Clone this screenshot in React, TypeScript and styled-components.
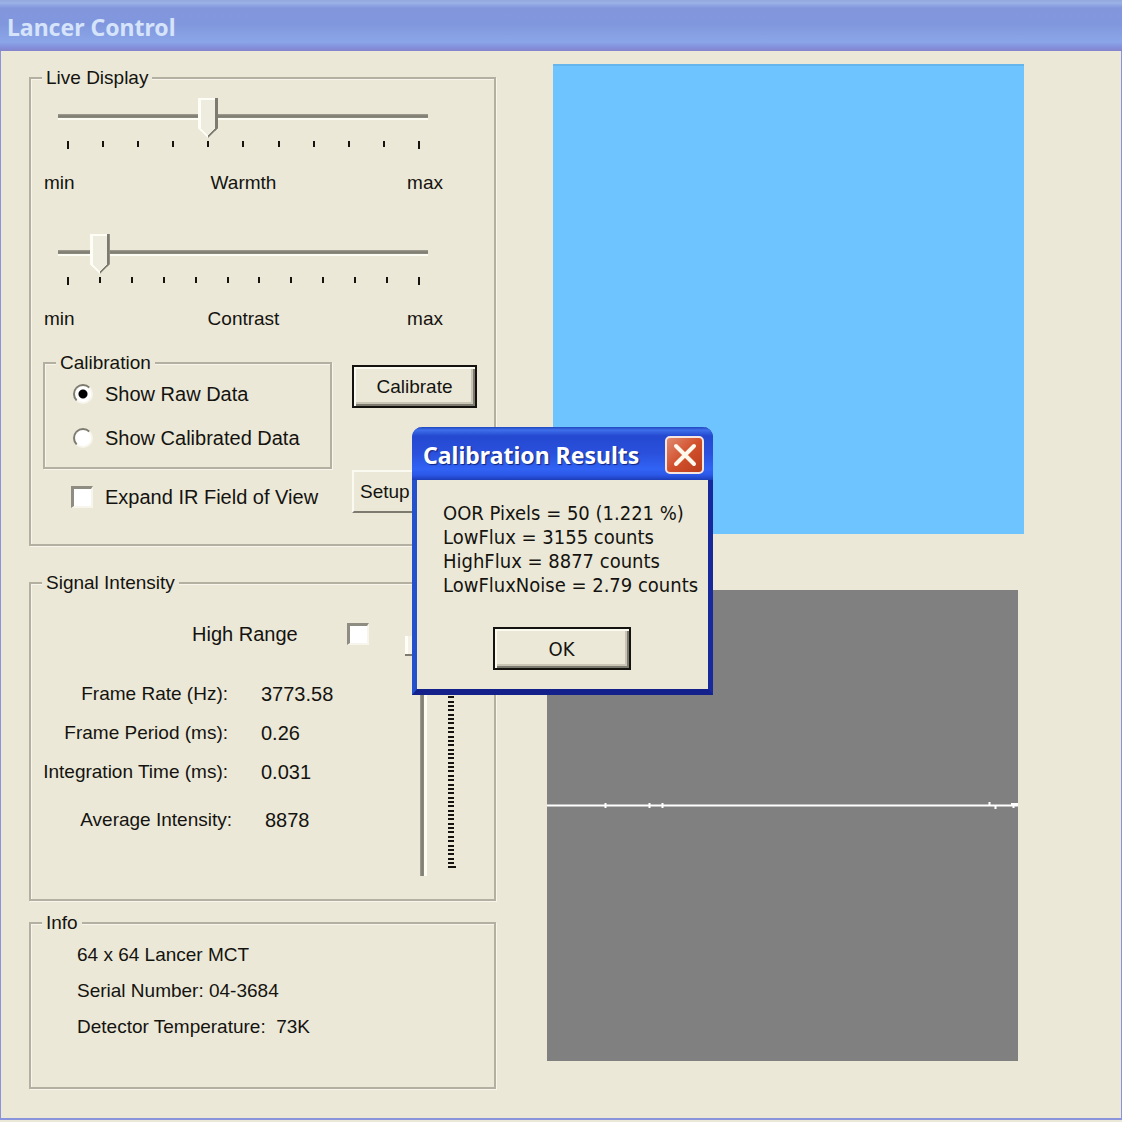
import React, { useState } from "react";
import styled, { createGlobalStyle, css } from "styled-components";

const face = "#ebe8d8";
const shade = "#7d7b70";
const line = "#b3b0a2";
const ink = "#14130f";
const uiFont = '"Liberation Sans", Arial, sans-serif';
const dialogFont = '"DejaVu Sans Condensed", "DejaVu Sans", Tahoma, sans-serif';
const captionFont = '"Noto Sans", "Open Sans", sans-serif';

const GlobalStyle = createGlobalStyle`
  * { box-sizing: border-box; }
  body { margin: 0; background: ${face}; }
`;

const AppWindow = styled.div`
  position: relative;
  border: solid #8a94dc;
  border-width: 0 1px 2px;
  background: ${face};
  color: ${ink};
  font: 19px/24px ${uiFont};
`;

const CaptionBar = styled.header`
  display: flex;
  align-items: center;
  height: 51px;
  margin: 0 -1px;
  padding: 2px 7px 0;
  background: linear-gradient(
    #93a9de 0,
    #9bb2e6 3px,
    #8296dc 8px,
    #8197dd 24px,
    #8aa6e8 42px,
    #8490dc 47px,
    #8484cc 51px
  );
`;

const Caption = styled.h1`
  margin: 0;
  color: #d6e4fb;
  font: bold 23px/28px ${captionFont};
`;

const Main = styled.main`
  display: grid;
  grid-template-columns: minmax(0, 467fr) minmax(0, 477fr);
  column-gap: 51px;
  padding: 13px 97px 29px 28px;
`;

const Group = styled.fieldset<{ $gap?: number }>`
  min-width: 0;
  margin: 0 0 ${(p) => p.$gap ?? 0}px;
  padding: 0;
  border: 2px solid ${line};
  box-shadow: inset 1px 1px 0 #f8f6ec, 1px 1px 0 #f8f6ec;
`;

const GroupTitle = styled.legend`
  margin-left: 11px;
  padding: 0 4px;
  background: ${face};
  line-height: 28px;
`;

const DisplayBody = styled.div`
  padding: 6px 17px 31px 12px;
`;

const Trackbar = styled.div`
  margin-bottom: 39px;

  & + & {
    margin-bottom: 18px;
  }
`;

const TrackArea = styled.div`
  margin: 0 49px 0 15px;
`;

const thumbAcross = css`
  width: 20px;
  height: 40px;
  border: 0;
  border-radius: 0;
  background:
    linear-gradient(135deg, transparent 5px, ${shade} 5px) right bottom / 10px 10px no-repeat,
    linear-gradient(225deg, transparent 5px, #fffef6 5px) left bottom / 10px 10px no-repeat,
    linear-gradient(90deg, #fffef6 3px, transparent 3px, transparent 17px, ${shade} 17px),
    linear-gradient(#fffef6 2px, #eeecdf 2px);
  clip-path: polygon(0 0, 100% 0, 100% 30px, 10px 100%, 0 30px);
`;

const Range = styled.input`
  display: block;
  width: 100%;
  height: 40px;
  margin: 0;
  appearance: none;
  background: linear-gradient(
    transparent 16px,
    #a3a195 16px,
    ${shade} 18px,
    #8f8d82 20px,
    #fdfcf2 20px,
    #fdfcf2 22px,
    transparent 22px
  );

  &::-webkit-slider-thumb {
    appearance: none;
    ${thumbAcross}
  }
`;

const TickRow = styled.div`
  display: flex;
  justify-content: space-between;
  align-items: flex-start;
  height: 8px;
  margin: 3px 8px 0 9px;
`;

const Tick = styled.span`
  width: 2px;
  height: 6px;
  background: ${ink};

  &:first-child,
  &:last-child {
    height: 8px;
  }
`;

const ScaleLabels = styled.div`
  display: grid;
  grid-template-columns: 1fr auto 1fr;
  margin: 22px 34px 0 1px;

  & > :last-child {
    text-align: right;
  }
`;

const CalibrationArea = styled.div`
  display: grid;
  grid-template-columns: minmax(0, 289fr) minmax(0, 125fr);
  column-gap: 20px;
`;

const RadioList = styled.div`
  display: grid;
  gap: 20px;
  padding: 5px 12px 17px 28px;
`;

const Choice = styled.label<{ $indent?: number; $gap?: number }>`
  display: flex;
  align-items: center;
  gap: ${(p) => p.$gap ?? 12}px;
  padding-left: ${(p) => p.$indent ?? 0}px;
  font-size: 20px;
  white-space: nowrap;
`;

const Radio = styled.input`
  width: 20px;
  height: 20px;
  margin: 0;
  appearance: none;
  border: 2px solid;
  border-color: ${shade} #f8f6ec #f8f6ec ${shade};
  border-radius: 50%;
  background: #fff;

  &:checked {
    background: radial-gradient(circle, #000 4px, #fff 5px);
  }
`;

const CheckBox = styled.input`
  width: 22px;
  height: 22px;
  margin: 0;
  appearance: none;
  border: solid;
  border-width: 3px 2px 2px 3px;
  border-color: #8f8d82 #f8f6ec #f8f6ec #8f8d82;
  background: #fff;

  &:checked {
    background: linear-gradient(#000, #000) center / 10px 10px no-repeat #fff;
  }
`;

const ExpandRow = styled.div`
  margin-top: 16px;
`;

const ButtonColumn = styled.div`
  display: flex;
  flex-direction: column;
  gap: 62px;
  padding-top: 16px;
`;

const PushButton = styled.button<{ $default?: boolean; $align?: string }>`
  height: 43px;
  padding: 0 6px;
  border: 2px solid;
  border-color: ${(p) => (p.$default ? ink : `#fbfaf1 ${shade} ${shade} #fbfaf1`)};
  background: ${face};
  box-shadow: ${(p) =>
    p.$default
      ? `inset 2px 2px 0 #fbfaf1, inset -2px -2px 0 ${shade}, inset -4px -4px 0 #c9c6b6`
      : "none"};
  color: ${ink};
  font: inherit;
  line-height: 24px;
  text-align: ${(p) => p.$align ?? "center"};
`;

const SignalBody = styled.div`
  display: grid;
  grid-template-columns: minmax(0, 1fr) 50px;
  column-gap: 18px;
  padding: 25px 39px 23px 11px;
`;

const HighRangeRow = styled.div`
  margin-bottom: 36px;
`;

const Readings = styled.dl<{ $labelWidth: number }>`
  display: grid;
  grid-template-columns: ${(p) => p.$labelWidth}px 1fr;
  gap: 15px 33px;
  margin: 0 0 24px;
  white-space: nowrap;

  dt {
    text-align: right;
  }

  dd {
    margin: 0;
    font-size: 20px;
  }
`;

const LevelSlider = styled.div`
  display: flex;
  gap: 3px;
  height: 240px;
  margin-top: 14px;
`;

const VerticalRange = styled.input`
  width: 40px;
  height: 100%;
  margin: 0;
  appearance: none;
  writing-mode: vertical-lr;
  direction: rtl;
  background: linear-gradient(
    90deg,
    transparent 15px,
    #a3a195 15px,
    ${shade} 17px,
    #8f8d82 19px,
    #fdfcf2 19px,
    #fdfcf2 22px,
    transparent 22px
  );

  &::-webkit-slider-thumb {
    appearance: none;
    width: 40px;
    height: 20px;
    background:
      linear-gradient(transparent 18px, ${shade} 18px),
      linear-gradient(90deg, #fffef6 3px, #f4f2e8 3px);
    clip-path: polygon(0 0, 30px 0, 100% 10px, 30px 100%, 0 100%);
  }
`;

const TickColumn = styled.div`
  display: flex;
  flex-direction: column;
  justify-content: space-between;
  width: 8px;
  margin: 8px 0 7px;
`;

const SideTick = styled.span`
  width: 6px;
  height: 2px;
  background: ${ink};

  &:last-child {
    width: 8px;
  }
`;

const InfoList = styled.ul`
  margin: 0;
  padding: 0 12px 42px 46px;
  list-style: none;
  line-height: 36px;
  white-space: pre;
`;

const Views = styled.div`
  display: flex;
  flex-direction: column;
  gap: 56px;
`;

const ThermalView = styled.div`
  height: 470px;
  margin-left: 6px;
  border-top: 2px solid #66b6ee;
  background: #6ec4ff;
`;

const SignalPlot = styled.svg`
  display: block;
  width: calc(100% - 6px);
  height: 471px;
  background: #808080;
`;

const Dialog = styled.section`
  position: absolute;
  top: 427px;
  left: 411px;
  width: 301px;
  border: solid;
  border-width: 0 5px 6px;
  border-color: #1d3cb4 #18299c #14218a #2450cc;
  border-radius: 10px 10px 0 0;
  background: ${face};
  font: 20px/24px ${dialogFont};
`;

const DialogBar = styled.header`
  display: flex;
  align-items: center;
  justify-content: space-between;
  height: 53px;
  margin: 0 -5px;
  padding: 3px 9px 0 11px;
  border-radius: 10px 10px 0 0;
  background: linear-gradient(
    #1f48c0 0,
    #3f70ea 3px,
    #2448d0 9px,
    #2a50dc 26px,
    #3163f4 42px,
    #2c58e8 48px,
    #1c3cb8 53px
  );
`;

const DialogTitle = styled.h2`
  margin: 0;
  color: #fff;
  font: bold 23px/28px ${captionFont};
  text-shadow: 1px 1px 1px #10247c;
  white-space: nowrap;
`;

const CloseButton = styled.button`
  display: grid;
  place-items: center;
  width: 39px;
  height: 38px;
  padding: 0;
  border: 2px solid #f6e6e2;
  border-radius: 5px;
  background: linear-gradient(135deg, #e08a70, #d2502c 50%, #b83c1c);
`;

const DialogBody = styled.div`
  display: flex;
  flex-direction: column;
  align-items: center;
  padding: 21px 0 19px 26px;
`;

const Results = styled.p`
  align-self: stretch;
  margin: 0 0 30px;
  white-space: pre;
`;

const OkButton = styled(PushButton)`
  width: 138px;
  margin-right: 28px;
`;

type ScaleProps = { name: string; max: number; initial: number };

function Scale({ name, max, initial }: ScaleProps) {
  const [value, setValue] = useState(initial);
  return (
    <Trackbar>
      <TrackArea>
        <Range
          id={name}
          type="range"
          min={0}
          max={max}
          value={value}
          onChange={(e) => setValue(Number(e.target.value))}
        />
        <TickRow>
          {Array.from({ length: max + 1 }, (_, i) => (
            <Tick key={i} />
          ))}
        </TickRow>
      </TrackArea>
      <ScaleLabels>
        <span>min</span>
        <label htmlFor={name}>{name}</label>
        <span>max</span>
      </ScaleLabels>
    </Trackbar>
  );
}

export default function App() {
  const [mode, setMode] = useState("raw");
  const [open, setOpen] = useState(true);

  return (
    <>
      <GlobalStyle />
      <AppWindow>
        <CaptionBar>
          <Caption>Lancer Control</Caption>
        </CaptionBar>
        <Main>
          <div>
            <Group $gap={23}>
              <GroupTitle>Live Display</GroupTitle>
              <DisplayBody>
                <Scale name="Warmth" max={10} initial={4} />
                <Scale name="Contrast" max={11} initial={1} />
                <CalibrationArea>
                  <div>
                    <Group>
                      <GroupTitle>Calibration</GroupTitle>
                      <RadioList>
                        <Choice>
                          <Radio
                            type="radio"
                            name="mode"
                            checked={mode === "raw"}
                            onChange={() => setMode("raw")}
                          />
                          Show Raw Data
                        </Choice>
                        <Choice>
                          <Radio
                            type="radio"
                            name="mode"
                            checked={mode === "calibrated"}
                            onChange={() => setMode("calibrated")}
                          />
                          Show Calibrated Data
                        </Choice>
                      </RadioList>
                    </Group>
                    <ExpandRow>
                      <Choice $indent={28}>
                        <CheckBox type="checkbox" />
                        Expand IR Field of View
                      </Choice>
                    </ExpandRow>
                  </div>
                  <ButtonColumn>
                    <PushButton type="button" $default onClick={() => setOpen(true)}>
                      Calibrate
                    </PushButton>
                    <PushButton type="button" $align="left">
                      Setup
                    </PushButton>
                  </ButtonColumn>
                </CalibrationArea>
              </DisplayBody>
            </Group>

            <Group $gap={8}>
              <GroupTitle>Signal Intensity</GroupTitle>
              <SignalBody>
                <div>
                  <HighRangeRow>
                    <Choice htmlFor="high-range" $indent={150} $gap={49}>
                      High Range
                      <CheckBox id="high-range" type="checkbox" />
                    </Choice>
                  </HighRangeRow>
                  <Readings $labelWidth={186}>
                    <dt>Frame Rate (Hz):</dt>
                    <dd>3773.58</dd>
                    <dt>Frame Period (ms):</dt>
                    <dd>0.26</dd>
                    <dt>Integration Time (ms):</dt>
                    <dd>0.031</dd>
                  </Readings>
                  <Readings $labelWidth={190}>
                    <dt>Average Intensity:</dt>
                    <dd>8878</dd>
                  </Readings>
                </div>
                <LevelSlider>
                  <VerticalRange
                    type="range"
                    aria-label="Integration time"
                    min={0}
                    max={51}
                    defaultValue={51}
                  />
                  <TickColumn>
                    {Array.from({ length: 52 }, (_, i) => (
                      <SideTick key={i} />
                    ))}
                  </TickColumn>
                </LevelSlider>
              </SignalBody>
            </Group>

            <Group>
              <GroupTitle>Info</GroupTitle>
              <InfoList>
                <li>64 x 64 Lancer MCT</li>
                <li>Serial Number: 04-3684</li>
                <li>{"Detector Temperature:  73K"}</li>
              </InfoList>
            </Group>
          </div>

          <Views>
            <ThermalView />
            <SignalPlot viewBox="0 0 471 471" preserveAspectRatio="none">
              <path
                d="M0 215.500H471M58.500 213V218M102.500 213V218M115.500 213V218M442.500 212V216M448.500 215V219M464 214H471M466.500 213V218"
                stroke="#fff"
                strokeWidth="2"
                fill="none"
              />
            </SignalPlot>
          </Views>
        </Main>

        {open && (
          <Dialog role="dialog" aria-labelledby="results-title">
            <DialogBar>
              <DialogTitle id="results-title">Calibration Results</DialogTitle>
              <CloseButton type="button" aria-label="Close" onClick={() => setOpen(false)}>
                <svg width="24" height="24" viewBox="0 0 24 24">
                  <path
                    d="M3 3L21 21M21 3L3 21"
                    stroke="#fff8ec"
                    strokeWidth="4"
                    strokeLinecap="round"
                  />
                </svg>
              </CloseButton>
            </DialogBar>
            <DialogBody>
              <Results>
                {"OOR Pixels = 50 (1.221 %)\nLowFlux = 3155 counts\nHighFlux = 8877 counts\nLowFluxNoise = 2.79 counts"}
              </Results>
              <OkButton type="button" $default onClick={() => setOpen(false)}>
                OK
              </OkButton>
            </DialogBody>
          </Dialog>
        )}
      </AppWindow>
    </>
  );
}
